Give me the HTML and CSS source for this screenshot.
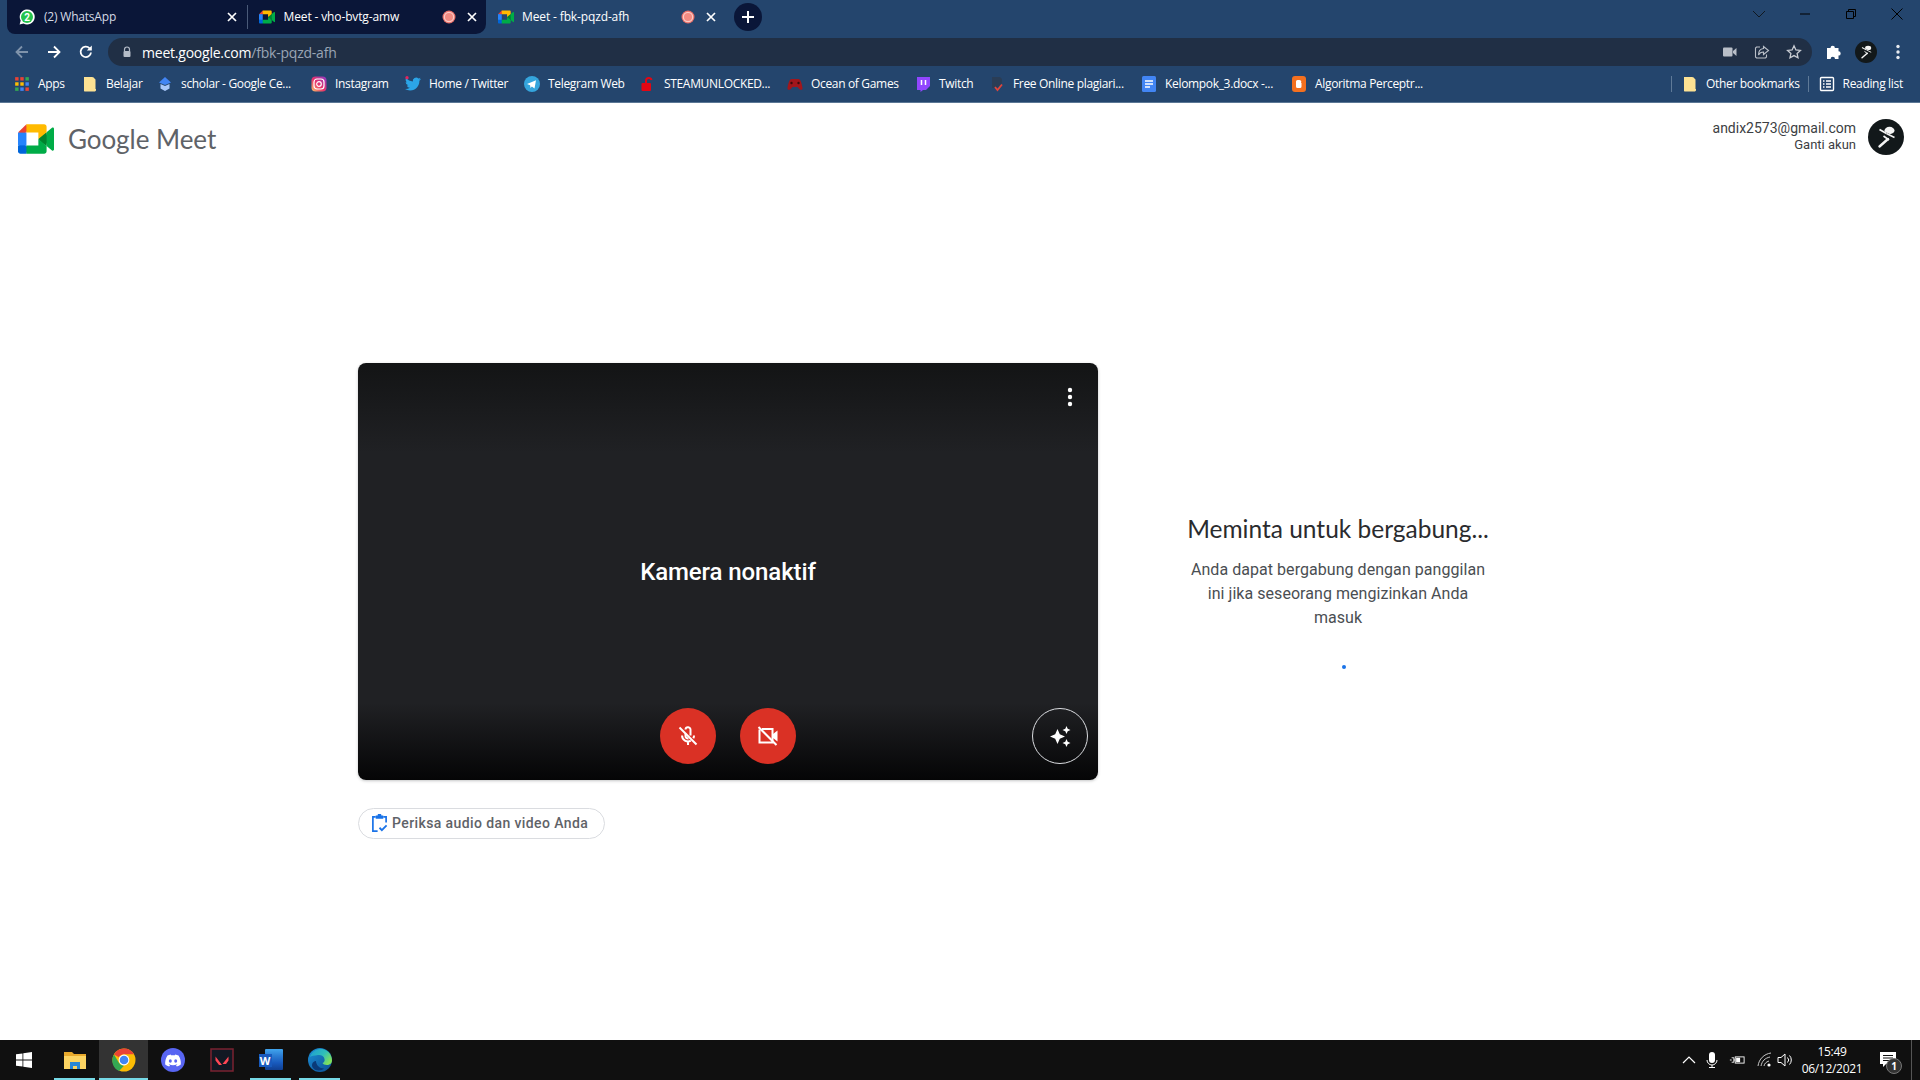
FILE: index.html
```html
<!DOCTYPE html>
<html lang="id">
<head>
<meta charset="utf-8">
<title>Meet - fbk-pqzd-afh</title>
<link rel="stylesheet" href="styles.css">
</head>
<body>
<svg class="defs" width="0" height="0" aria-hidden="true">
  <symbol id="meet" viewBox="0 0 87.5 72">
    <path fill="#00832d" d="M49.5 36l8.53 9.75 11.47 7.33 2-17.02-2-16.64-11.69 6.44z"/>
    <path fill="#0066da" d="M0 51.5V66c0 3.315 2.685 6 6 6h14.5l3-10.96-3-9.54-9.95-3z"/>
    <path fill="#e94235" d="M20.5 0L0 20.5l10.55 3 9.95-3 2.95-9.41z"/>
    <path fill="#2684fc" d="M20.5 20.5H0v31h20.5z"/>
    <path fill="#00ac47" d="M82.6 8.68L69.5 19.42v33.66l13.16 10.79c1.97 1.54 4.85.135 4.85-2.37V11c0-2.535-2.945-3.925-4.91-2.32zM49.5 36v15.5h-29V72h43c3.315 0 6-2.685 6-6V53.08z"/>
    <path fill="#ffba00" d="M63.5 0h-43v20.5h29V36l20-16.57V6c0-3.315-2.685-6-6-6z"/>
  </symbol>
  <symbol id="close" viewBox="0 0 16 16">
    <path d="M4 4l8 8M12 4l-8 8" stroke="#fff" stroke-width="1.700" fill="none"/>
  </symbol>
  <symbol id="rec" viewBox="0 0 16 16">
    <circle cx="8" cy="8" r="6.500" fill="#e8716a"/>
    <circle cx="8" cy="8" r="5.300" fill="#fbc9c4"/>
    <circle cx="8" cy="8" r="4" fill="#f28b82"/>
  </symbol>
  <symbol id="folder" viewBox="0 0 16 16">
    <path d="M2 1h8.500l.5 .5V13h3v1.500l-1 1H2.500L2 15z" fill="#fde293"/>
    <path d="M11 1.500h1v.5l1.500 1.500V13H11z" fill="#fde293"/>
  </symbol>
  <symbol id="avatar" viewBox="0 0 36 36">
    <circle cx="18" cy="18" r="18" fill="#12181a"/>
    <ellipse cx="21.500" cy="11.500" rx="5" ry="3.700" fill="#f4f4f4"/>
    <path d="M11.500 11l15.500 7.500" stroke="#12181a" stroke-width="1.500"/>
    <path d="M11.500 10.500l7 4" stroke="#f4f4f4" stroke-width="1.800"/>
    <path d="M18.500 14.500l8 4" stroke="#f4f4f4" stroke-width="1.400"/>
    <path d="M20 20l-8.500 7.500" stroke="#f4f4f4" stroke-width="2.400" stroke-linecap="round"/>
    <path d="M15.500 17l5.500 4" stroke="#f4f4f4" stroke-width="1.600"/>
  </symbol>
</svg>

<header class="browser">
  <div class="tabstrip">
    <div class="tabs">
      <div class="tab">
        <svg class="fav" viewBox="0 0 16 16"><path d="M.6 15.500l1.100-3.900A7.500 7.500 0 1 1 4.500 14.400z" fill="#fff"/><circle cx="8" cy="8" r="6" fill="#25c44d"/><text x="8" y="11.500" class="fav-num">2</text></svg>
        <span class="tab-title muted">(2) WhatsApp</span>
        <svg class="tab-close"><use href="#close"/></svg>
      </div>
      <div class="tab split">
        <svg class="fav"><use href="#meet"/></svg>
        <span class="tab-title">Meet - vho-bvtg-amw</span>
        <svg class="tab-rec"><use href="#rec"/></svg>
        <svg class="tab-close"><use href="#close"/></svg>
      </div>
    </div>
    <div class="tab active">
      <svg class="fav"><use href="#meet"/></svg>
      <span class="tab-title">Meet - fbk-pqzd-afh</span>
      <svg class="tab-rec"><use href="#rec"/></svg>
      <svg class="tab-close"><use href="#close"/></svg>
    </div>
    <div class="newtab"><svg viewBox="0 0 16 16" width="16" height="16"><path d="M8 2v12M2 8h12" stroke="#fff" stroke-width="2"/></svg></div>
    <div class="winctl">
      <svg viewBox="0 0 16 16" class="wc"><path d="M2 5l6 6 6-6" stroke="#101820" fill="none"/></svg>
      <svg viewBox="0 0 16 16" class="wc"><path d="M3 8h10" stroke="#000" stroke-width="1"/></svg>
      <svg viewBox="0 0 16 16" class="wc"><path d="M3.500 5.500h7v7h-7zM5.500 5.500v-2h7v7h-2" stroke="#000" fill="none"/></svg>
      <svg viewBox="0 0 16 16" class="wc"><path d="M2.500 2.500l11 11M13.500 2.500l-11 11" stroke="#000" fill="none"/></svg>
    </div>
  </div>

  <div class="toolbar">
    <div class="nav">
      <svg viewBox="0 0 16 16" class="navbtn"><path d="M14 8H3M8 2.500L2.500 8 8 13.500" stroke="#7f93ab" stroke-width="1.800" fill="none"/></svg>
      <svg viewBox="0 0 16 16" class="navbtn"><path d="M2 8h11M8 2.500L13.500 8 8 13.500" stroke="#fff" stroke-width="1.800" fill="none"/></svg>
      <svg viewBox="0 0 16 16" class="navbtn"><path d="M13 8.500A5.200 5.200 0 1 1 11.600 4.300" stroke="#fff" stroke-width="1.800" fill="none"/><path d="M13.800 1.500v5h-5z" fill="#fff"/></svg>
    </div>
    <div class="omnibox">
      <svg viewBox="0 0 12 12" class="lock"><path d="M3.500 5V3.500a2.500 2.500 0 0 1 5 0V5" stroke="#b4bcc8" stroke-width="1.200" fill="none"/><rect x="2.500" y="5" width="7" height="6" rx="1" fill="#b4bcc8"/></svg>
      <span class="url"><span class="host">meet.google.com</span><span class="path">/fbk-pqzd-afh</span></span>
      <div class="omni-actions">
        <svg viewBox="0 0 16 16" class="omni-ic"><rect x="1" y="3.500" width="9.500" height="9" rx="1" fill="#b9bfc8"/><path d="M11 7l3.500-3v8L11 9z" fill="#b9bfc8"/></svg>
        <svg viewBox="0 0 16 16" class="omni-ic"><path d="M6 3H2.500l-1 1v9l1 1h9l1-1v-2.500" stroke="#b9bfc8" stroke-width="1.100" fill="none"/><path d="M9.500 2.500l5 4-5 4V8C7 8 5.500 9 4.500 11c0-4 2-6.200 5-6.500z" stroke="#b9bfc8" stroke-width="1.100" fill="none"/></svg>
        <svg viewBox="0 0 16 16" class="omni-ic"><path d="M8 1.800l1.900 4.100 4.500.5-3.300 3 .9 4.400L8 11.600l-4 2.200.9-4.400-3.300-3 4.500-.5z" stroke="#c8ccd3" stroke-width="1.300" fill="none"/></svg>
      </div>
    </div>
    <div class="tb-right">
      <div class="tb-slot"><svg viewBox="0 0 18 18" class="puzzle"><path d="M2 5h3.500a2.200 2.200 0 1 1 4.400 0h3.600v3.200a2.200 2.200 0 1 1 0 4.400V16H10a2.200 2.200 0 0 0-4.400 0H2z" fill="#fff"/></svg></div>
      <div class="tb-slot"><svg class="tb-avatar"><use href="#avatar"/></svg></div>
      <div class="tb-slot"><svg viewBox="0 0 16 16" class="omni-ic"><circle cx="8" cy="2.500" r="1.700" fill="#e8ebf0"/><circle cx="8" cy="8" r="1.700" fill="#e8ebf0"/><circle cx="8" cy="13.500" r="1.700" fill="#e8ebf0"/></svg></div>
    </div>
  </div>

  <div class="bookmarks">
    <div class="bm-list">
      <div class="bm">
        <svg viewBox="0 0 14 14" class="bm-ic"><path fill="#ea4335" d="M1 1h3v3H1z"/><path fill="#ea4335" d="M5.500 1h3v3h-3z"/><path fill="#34a853" d="M10 1h3v3h-3z"/><path fill="#fbbc04" d="M1 5.500h3v3H1z"/><path fill="#fbbc04" d="M5.500 5.500h3v3h-3z"/><path fill="#4285f4" d="M10 5.500h3v3h-3z"/><path fill="#34a853" d="M1 10h3v3H1z"/><path fill="#4285f4" d="M5.500 10h3v3h-3z"/><path fill="#ea4335" d="M10 10h3v3h-3z"/></svg>
        <span>Apps</span>
      </div>
      <div class="bm"><svg class="bm-ic"><use href="#folder"/></svg><span>Belajar</span></div>
      <div class="bm">
        <svg viewBox="0 0 16 16" class="bm-ic"><path d="M8 1l6 5.500L8 9 2 6.500z" fill="#4285f4"/><path d="M3.500 8L8 10l4.500-2v4.500L8 15l-4.500-2.500z" fill="#a8c7fa"/></svg>
        <span>scholar - Google Ce...</span>
      </div>
      <div class="bm">
        <svg viewBox="0 0 16 16" class="bm-ic"><defs><linearGradient id="ig" x1="0" y1="1" x2="1" y2="0"><stop offset="0" stop-color="#fdc468"/><stop offset=".45" stop-color="#e8336a"/><stop offset="1" stop-color="#8a3ac8"/></linearGradient></defs><rect x=".5" y=".5" width="15" height="15" rx="4" fill="url(#ig)"/><rect x="3" y="3" width="10" height="10" rx="3" fill="none" stroke="#fff" stroke-width="1.200"/><circle cx="8" cy="8" r="2.300" fill="none" stroke="#fff" stroke-width="1.200"/></svg>
        <span>Instagram</span>
      </div>
      <div class="bm">
        <svg viewBox="0 0 24 24" class="bm-ic"><path fill="#2ba5e8" d="M23.953 4.570a10 10 0 01-2.825.775 4.958 4.958 0 002.163-2.723c-.951.555-2.005.959-3.127 1.184a4.920 4.920 0 00-8.384 4.482C7.690 8.095 4.067 6.130 1.640 3.162a4.822 4.822 0 00-.666 2.475c0 1.710.870 3.213 2.188 4.096a4.904 4.904 0 01-2.228-.616v.06a4.923 4.923 0 003.946 4.827 4.996 4.996 0 01-2.212.085 4.936 4.936 0 004.604 3.417 9.867 9.867 0 01-6.102 2.105c-.39 0-.779-.023-1.170-.067a13.995 13.995 0 007.557 2.209c9.053 0 13.998-7.496 13.998-13.985 0-.21 0-.42-.015-.63A9.935 9.935 0 0024 4.590z"/><circle cx="3" cy="2.500" r="2.500" fill="#e0245e"/></svg>
        <span>Home / Twitter</span>
      </div>
      <div class="bm">
        <svg viewBox="0 0 16 16" class="bm-ic"><circle cx="8" cy="8" r="8" fill="#35a5dd"/><path d="M3 8l9-3.800-1.500 8.300-2.600-2-1.400 1.400-.4-2.600z" fill="#fff"/></svg>
        <span>Telegram Web</span>
      </div>
      <div class="bm">
        <svg viewBox="0 0 16 16" class="bm-ic"><path d="M6 7V4.500a2.800 2.800 0 0 1 5.500-.5" stroke="#e30613" stroke-width="2" fill="none"/><rect x="1.500" y="7" width="9.500" height="8" rx="1" fill="#e30613"/></svg>
        <span>STEAMUNLOCKED...</span>
      </div>
      <div class="bm">
        <svg viewBox="0 0 16 16" class="bm-ic"><path d="M4.500 3h7c2 0 3.500 5 4 9 .2 2-2 2.500-3.200 1L10.500 11h-5L3.700 13c-1.200 1.500-3.400 1-3.200-1 .5-4 2-9 4-9z" fill="#a2161c"/><circle cx="4.500" cy="7" r="1.200" fill="#3c0a0d"/><circle cx="11.500" cy="7" r="1.200" fill="#3c0a0d"/></svg>
        <span>Ocean of Games</span>
      </div>
      <div class="bm">
        <svg viewBox="0 0 16 16" class="bm-ic"><path d="M2 1h13v9l-4 4H8l-2.500 2v-2H2z" fill="#9146ff"/><path d="M6.500 4v5M10.500 4v5" stroke="#fff" stroke-width="1.500"/></svg>
        <span>Twitch</span>
      </div>
      <div class="bm">
        <svg viewBox="0 0 16 16" class="bm-ic"><path d="M3 1h8l2 2v4l-5 5H3z" fill="#2a3d56"/><path d="M6 11l2.500 3L13 8.500" stroke="#e2453a" stroke-width="1.800" fill="none"/></svg>
        <span>Free Online plagiari...</span>
      </div>
      <div class="bm">
        <svg viewBox="0 0 16 16" class="bm-ic"><rect x="1" y="0" width="14" height="16" rx="1.500" fill="#4285f4"/><path d="M4 5h8M4 8h8M4 11h5" stroke="#fff" stroke-width="1.500"/></svg>
        <span>Kelompok_3.docx -...</span>
      </div>
      <div class="bm">
        <svg viewBox="0 0 16 16" class="bm-ic"><rect x="1" y="0" width="14" height="16" rx="3" fill="#f4701f"/><path d="M5 7V5.500A1.500 1.500 0 0 1 6.500 4H8a2 2 0 0 1 2 3h.5v3.500A1.500 1.500 0 0 1 9 12H6.500A1.500 1.500 0 0 1 5 10.500z" fill="#fff"/></svg>
        <span>Algoritma Perceptr...</span>
      </div>
    </div>
    <div class="bm-right">
      <span class="bm-sep"></span>
      <div class="bm"><svg class="bm-ic"><use href="#folder"/></svg><span>Other bookmarks</span></div>
      <span class="bm-sep"></span>
      <div class="bm">
        <svg viewBox="0 0 16 16" class="bm-ic"><rect x="1.500" y="1.500" width="13" height="13" rx="1" stroke="#fff" stroke-width="1.400" fill="none"/><path d="M4 5h1.500M4 8h1.500M4 11h1.500M7 5h5M7 8h5M7 11h5" stroke="#fff" stroke-width="1.300"/></svg>
        <span>Reading list</span>
      </div>
    </div>
  </div>
</header>

<main class="page">
  <div class="topbar">
    <div class="brand">
      <svg class="brand-logo"><use href="#meet"/></svg>
      <span class="brand-name">Google Meet</span>
    </div>
    <div class="account">
      <div class="account-text">
        <div class="account-mail">andix2573@gmail.com</div>
        <div class="account-switch">Ganti akun</div>
      </div>
      <svg class="account-avatar"><use href="#avatar"/></svg>
    </div>
  </div>

  <div class="stage">
    <div class="preview-col">
      <div class="preview">
        <span class="cam-off">Kamera nonaktif</span>
        <svg viewBox="0 0 24 24" class="more"><circle cx="12" cy="5" r="2.200" fill="#fff"/><circle cx="12" cy="12" r="2.200" fill="#fff"/><circle cx="12" cy="19" r="2.200" fill="#fff"/></svg>
        <div class="controls">
          <div class="ctl">
            <svg viewBox="0 0 24 24" class="ctl-ic"><path d="M14.500 11.500V6a2.500 2.500 0 0 0-5-.5" stroke="#fff" stroke-width="2" fill="none"/><path d="M9.500 9.500V12a2.500 2.500 0 0 0 3 2.400" stroke="#fff" stroke-width="2" fill="none"/><path d="M6 11.500a6 6 0 0 0 8.800 5.200M18 11.500a6 6 0 0 1-.7 2.800M12 18v3" stroke="#fff" stroke-width="2" fill="none"/><path d="M3.500 3.500l17 17" stroke="#fff" stroke-width="2"/></svg>
          </div>
          <div class="ctl">
            <svg viewBox="0 0 24 24" class="ctl-ic"><path d="M6 5h10.500v13.500H3.500V5.500" stroke="#fff" stroke-width="2" fill="none"/><path d="M17 10l4.500-3.500v11L17 14z" fill="#fff"/><path d="M2.500 3l18 18" stroke="#fff" stroke-width="2"/></svg>
          </div>
        </div>
        <div class="effects">
          <svg viewBox="0 0 24 24" class="ctl-ic"><path d="M9.500 5l2.300 5.200L17 12.500l-5.200 2.300L9.500 20l-2.300-5.200L2 12.500l5.200-2.300z" fill="#fff"/><path d="M18.500 2l1.200 2.800L22.500 6l-2.800 1.200L18.500 10l-1.200-2.800L14.500 6l2.800-1.200zM18.500 15l1.200 2.800 2.800 1.200-2.800 1.200-1.200 2.800-1.200-2.800-2.800-1.200 2.800-1.200z" fill="#fff"/></svg>
        </div>
      </div>
      <div class="check-pill">
        <svg viewBox="0 0 18 20" class="check-ic"><path d="M5 3H2v15h5M13 3h3v6" stroke="#1a73e8" stroke-width="1.800" fill="none"/><path d="M5 1.500h2a2 2 0 0 1 4 0h2V5H5z" fill="#1a73e8"/><path d="M9 14.500l2.500 2.500 5-5" stroke="#1a73e8" stroke-width="1.900" fill="none"/></svg>
        <span>Periksa audio dan video Anda</span>
      </div>
    </div>
    <div class="status">
      <h1 class="status-title">Meminta untuk bergabung...</h1>
      <p class="status-text">Anda dapat bergabung dengan panggilan ini jika seseorang mengizinkan Anda masuk</p>
      <div class="spinner"></div>
    </div>
  </div>
</main>

<footer class="taskbar">
  <div class="start">
    <svg viewBox="0 0 16 16" width="16" height="16"><path d="M0 2.300l6.500-.9v6.200H0zM7.300 1.300L16 0v7.600H7.300zM0 8.400h6.500v6.200L0 13.700zM7.300 8.400H16V16l-8.700-1.300z" fill="#fff"/></svg>
  </div>
  <div class="task open">
    <svg viewBox="0 0 24 24" class="task-ic"><path d="M1 4h8l2 2h12v15H1z" fill="#e8a92c"/><path d="M1 8h22v13H1z" fill="#fcd462"/><path d="M7 14h10v7h-3v-3h-4v3H7z" fill="#2a87d6"/></svg>
  </div>
  <div class="task open current">
    <svg viewBox="0 0 24 24" class="task-ic"><circle cx="12" cy="12" r="11.500" fill="#fbbc04"/><path d="M12 .5a11.500 11.500 0 0 1 10 5.750H12a5.750 5.750 0 0 0-5 2.900L2 6.500A11.500 11.500 0 0 1 12 .5z" fill="#ea4335"/><path d="M2 6.500l5 8.500a5.750 5.750 0 0 0 5 2.750L7 23A11.500 11.500 0 0 1 2 6.500z" fill="#34a853"/><circle cx="12" cy="12" r="5.400" fill="#fff"/><circle cx="12" cy="12" r="4.300" fill="#4285f4"/></svg>
  </div>
  <div class="task">
    <svg viewBox="0 0 24 24" class="task-ic"><circle cx="12" cy="12" r="12" fill="#5865f2"/><path d="M17.500 7.500A13 13 0 0 0 14.300 6.500l-.4.8a12 12 0 0 0-3.800 0l-.4-.8a13 13 0 0 0-3.200 1C4.500 10.600 4 13.600 4.200 16.500a13 13 0 0 0 4 2l.8-1.300-1.300-.6.300-.3a9.500 9.500 0 0 0 8 0l.3.3-1.300.6.8 1.300a13 13 0 0 0 4-2c.3-3.400-.5-6.300-2.300-9z" fill="#fff"/><ellipse cx="9.300" cy="13" rx="1.500" ry="1.700" fill="#5865f2"/><ellipse cx="14.700" cy="13" rx="1.500" ry="1.700" fill="#5865f2"/></svg>
  </div>
  <div class="task">
    <svg viewBox="0 0 24 24" class="task-ic"><rect x="1" y="1" width="22" height="22" fill="#111823" stroke="#7a2230" stroke-width="1.500"/><path d="M5.500 8.500l6.500 8.500H9L5.500 12.500zM18.500 8.500v4L16 16h-3.500z" fill="#ff4655"/></svg>
  </div>
  <div class="task open">
    <div class="word">
      <span class="word-sheet"></span>
      <span class="word-w">W</span>
    </div>
  </div>
  <div class="task open">
    <svg viewBox="0 0 24 24" class="task-ic"><defs><linearGradient id="edgeA" x1="0" y1="0" x2="1" y2="1"><stop offset="0" stop-color="#1c8fd6"/><stop offset="1" stop-color="#0c4f94"/></linearGradient><linearGradient id="edgeB" x1="0" y1="0" x2="1" y2=".6"><stop offset="0" stop-color="#1c9bd6"/><stop offset=".6" stop-color="#30bfb8"/><stop offset="1" stop-color="#7fe05c"/></linearGradient></defs><circle cx="12" cy="12" r="12" fill="url(#edgeA)"/><path d="M2 9C4 2 11 0 16 1.500 21 3 24 7.500 24 12.500c0 3-2.500 4.500-5 4.500-2.500 0-4-.8-4.500-2 1.500-.5 2.500-2 2-4C16 8 13 6.500 10 7 6 7.500 3.500 8 2 9z" fill="url(#edgeB)"/><path d="M8 13c0 4 3.500 7.500 8 7.500-2 2.500-8 3-11-.5C3 17.500 4 13.500 8 13z" fill="#0a3a78"/></svg>
  </div>
  <div class="tray">
    <svg viewBox="0 0 16 16" class="tray-ic"><path d="M2 11l6-6 6 6" stroke="#fff" stroke-width="1.200" fill="none"/></svg>
    <svg viewBox="0 0 16 16" class="tray-ic"><rect x="5" y="0" width="6" height="11" rx="3" fill="#fff"/><path d="M3 8a5 5 0 0 0 10 0M8 13v3M5 15.500h6" stroke="#fff" fill="none"/></svg>
    <svg viewBox="0 0 18 16" class="tray-ic"><path d="M1 8h2M3 5.500h2.500v5H3M5.500 8H7" stroke="#fff" fill="none"/><rect x="7" y="4.500" width="10" height="7" stroke="#fff" fill="none"/><rect x="8" y="5.500" width="4.500" height="5" fill="#fff"/></svg>
    <svg viewBox="0 0 16 16" class="tray-ic"><path d="M1 14C2 7 7 2 14 1M4 14C5 9 8 6 13 5M7 14c.5-2.500 2-4 5-5" stroke="#c8c8c8" fill="none"/><circle cx="12" cy="13" r="1.600" fill="#fff"/></svg>
    <svg viewBox="0 0 16 16" class="tray-ic"><path d="M1 5.500h3L8 2v12L4 10.500H1z" stroke="#fff" fill="none"/><path d="M10.500 5.500a3.500 3.500 0 0 1 0 5M12.500 3.500a6.500 6.500 0 0 1 0 9" stroke="#fff" fill="none"/></svg>
    <div class="clock"><div>15:49</div><div>06/12/2021</div></div>
    <div class="notif">
      <svg viewBox="0 0 16 16" width="16" height="16"><path d="M0 0h16v12H6l-3 3v-3H0z" fill="#fff"/><path d="M3 3.500h10M3 6h10M3 8.500h7" stroke="#111"/></svg>
      <span class="notif-badge">1</span>
    </div>
    <span class="desk"></span>
  </div>
</footer>
</body>
</html>
```

FILE: styles.css
```css
* { box-sizing: border-box; }

html, body { margin: 0; height: 100%; }

body {
  width: 1920px;
  height: 1080px;
  display: flex;
  flex-direction: column;
  overflow: hidden;
  background: #fff;
  font-family: Roboto, "Liberation Sans", sans-serif;
}

.defs { position: absolute; }

/* browser chrome */
.browser {
  flex: none;
  height: 103px;
  background: #24456d;
  border-bottom: 1px solid #5b7795;
  color: #fff;
  font-family: "Open Sans", "Liberation Sans", sans-serif;
  font-size: 12px;
}

.tabstrip { height: 34px; display: flex; padding-left: 7px; }

.tabs {
  display: flex;
  background: #0a1638;
  border-radius: 0 0 10px 8px;
}

.tab {
  position: relative;
  width: 239.5px;
  height: 34px;
  display: flex;
  align-items: center;
  padding-left: 12px;
}

.tab.split::before {
  content: "";
  position: absolute;
  left: 0;
  top: 5px;
  bottom: 5px;
  width: 1px;
  background: #4a5a78;
}

.fav { width: 16px; height: 16px; flex: none; }
.fav-num { font: 700 10px Roboto, sans-serif; fill: #fff; text-anchor: middle; }

.tab-title {
  margin: 0 0 1px 9px;
  white-space: nowrap;
  letter-spacing: -.13px;
}
.tab-title.muted { color: #d5dbe6; letter-spacing: -.2px; }
.tab.active .tab-title { margin-left: 8px; }

.tab-close { position: absolute; left: 217px; top: 9px; width: 16px; height: 16px; }
.tab-rec { position: absolute; left: 194px; top: 9px; width: 16px; height: 16px; }

.newtab {
  width: 28px;
  height: 28px;
  margin: 3px 0 0 8px;
  border-radius: 50%;
  background: #0a1638;
  display: flex;
  align-items: center;
  justify-content: center;
}

.winctl {
  margin-left: auto;
  display: flex;
  gap: 30px;
  padding: 6px 15px 0 0;
}
.wc { width: 16px; height: 16px; }

.toolbar { height: 34px; display: flex; padding-top: 4px; }

.nav {
  width: 108px;
  height: 28px;
  flex: none;
  display: flex;
  align-items: center;
  padding-left: 14px;
  gap: 16px;
}
.navbtn { width: 16px; height: 16px; flex: none; }

.omnibox {
  flex: 1;
  height: 28px;
  background: #202f45;
  border-radius: 14px;
  display: flex;
  align-items: center;
  padding: 0 2px 0 13px;
}

.lock { width: 12px; height: 12px; flex: none; }

.url { margin-left: 9px; font-size: 14px; letter-spacing: -.22px; }
.host { color: #fff; }
.path { color: #9aa5b5; }

.omni-actions { margin-left: auto; display: flex; }
.omni-actions .omni-ic { margin: 0 8px; }
.omni-ic { width: 16px; height: 16px; flex: none; display: block; }

.tb-right { width: 108px; flex: none; height: 28px; display: flex; padding-left: 6px; }
.tb-slot { width: 32px; display: flex; align-items: center; justify-content: center; }
.tb-avatar { width: 22px; height: 22px; }
.puzzle { width: 18px; height: 18px; }

.bookmarks {
  height: 34px;
  display: flex;
  align-items: center;
  padding: 0 0 3px 14px;
  letter-spacing: -.33px;
}

.bm-list {
  display: grid;
  grid-template-columns: 68px 75px 154px 94px 119px 116px 147px 128px 74px 152px 150px auto;
  align-items: center;
}

.bm { display: flex; align-items: center; gap: 8px; white-space: nowrap; }
.bm-ic { width: 16px; height: 16px; flex: none; }

.bm-right {
  margin-left: auto;
  width: 249px;
  flex: none;
  display: flex;
  align-items: center;
}
.bm-right .bm { margin-left: 10px; margin-right: 8px; }
.bm-sep { width: 1px; height: 16px; flex: none; background: #5f7a98; }

/* meet page */
.page { flex: 1; min-height: 0; display: flex; flex-direction: column; }

.topbar {
  flex: none;
  display: flex;
  justify-content: space-between;
  align-items: center;
  padding: 16px 16px 0 18px;
}

.brand { display: flex; align-items: center; gap: 14px; }
.brand-logo { width: 36px; height: 30px; margin-top: 3px; }
.brand-name {
  padding-top: 4px;
  font-family: Lato, "Open Sans", sans-serif;
  font-size: 26px;
  color: #5f6368;
  letter-spacing: -.05px;
}

.account { display: flex; align-items: center; gap: 12px; }
.account-text { text-align: right; color: #3c4043; padding-bottom: 1px; }
.account-mail { font-size: 14px; line-height: 16px; margin-bottom: 1px; }
.account-switch { font-size: 13px; line-height: 16px; }
.account-avatar { width: 36px; height: 36px; }

.stage { display: flex; padding: 208px 0 0 358px; }

.preview-col { width: 740px; flex: none; }

.preview {
  position: relative;
  height: 417px;
  border-radius: 8px;
  background: linear-gradient(#131415 0, #202124 90px, #202124 340px, #050506 100%);
  box-shadow: 0 1px 3px rgba(60, 64, 67, .3);
  display: flex;
  align-items: center;
  justify-content: center;
}

.cam-off { color: #fff; font-size: 24px; font-weight: 500; letter-spacing: -.1px; }

.more { position: absolute; top: 22px; right: 16px; width: 24px; height: 24px; }

.controls {
  position: absolute;
  left: 0;
  right: 0;
  bottom: 16px;
  display: flex;
  justify-content: center;
  gap: 24px;
}

.ctl {
  width: 56px;
  height: 56px;
  border-radius: 50%;
  background: #da3125;
  display: flex;
  align-items: center;
  justify-content: center;
}
.ctl-ic { width: 24px; height: 24px; }

.effects {
  position: absolute;
  right: 10px;
  bottom: 16px;
  width: 56px;
  height: 56px;
  border-radius: 50%;
  border: 1px solid #dadce0;
  display: flex;
  align-items: center;
  justify-content: center;
}

.check-pill {
  width: 247px;
  height: 31px;
  margin-top: 28px;
  border: 1px solid #dadce0;
  border-radius: 16px;
  display: flex;
  align-items: center;
  gap: 4px;
  padding: 0 0 1px 12px;
  color: #5f6368;
  font-size: 14px;
  font-weight: 500;
  letter-spacing: .4px;
  white-space: nowrap;
}
.check-ic { width: 17px; height: 19px; flex: none; }

.status { width: 320px; margin-left: 80px; padding-top: 150px; text-align: center; }

.status-title {
  margin: 0;
  font-family: Lato, "Open Sans", sans-serif;
  font-size: 24.5px;
  line-height: 32px;
  font-weight: 400;
  color: #2a2b2e;
}

.status-text {
  margin: 13px 10px 0;
  font-size: 16px;
  line-height: 24px;
  letter-spacing: .05px;
  color: #4a4e52;
}

.spinner {
  width: 4px;
  height: 4px;
  margin: 35px 0 0 164px;
  border-radius: 50%;
  background: #1a73e8;
}

/* taskbar */
.taskbar {
  flex: none;
  height: 40px;
  background: #101010;
  display: flex;
  color: #fff;
  font-family: "Open Sans", "Liberation Sans", sans-serif;
  font-size: 12px;
}

.start { width: 50px; display: flex; align-items: center; justify-content: center; padding-right: 2px; }

.task {
  position: relative;
  width: 49px;
  display: flex;
  align-items: center;
  justify-content: center;
}
.task.current { background: #333; }
.task.open::after {
  content: "";
  position: absolute;
  left: 4px;
  right: 4px;
  bottom: 0;
  height: 2px;
  background: #76d9e6;
}
.task.current::after { left: 0; right: 0; }

.task-ic { width: 24px; height: 24px; }

.word { position: relative; width: 24px; height: 22px; }
.word-sheet {
  position: absolute;
  left: 6px;
  top: 0;
  width: 18px;
  height: 21px;
  border-radius: 1px;
  background: linear-gradient(#41a5ee 0, #2b7cd3 33%, #185abd 66%, #103f91 100%);
}
.word-w {
  position: absolute;
  left: 0;
  top: 5px;
  width: 13px;
  height: 13px;
  background: #185abd;
  color: #fff;
  font: 700 11px/13px "Open Sans", sans-serif;
  text-align: center;
}

.tray {
  margin-left: auto;
  width: 239px;
  display: grid;
  grid-template-columns: 23px 25px 28px 20px 23px 80px 31px 9px;
  align-items: center;
}
.tray-ic { width: 16px; height: 16px; display: block; }

.clock {
  width: 64px;
  text-align: center;
  font-size: 12px;
  line-height: 17px;
  letter-spacing: -.3px;
}

.notif { position: relative; width: 16px; height: 16px; }
.notif svg { display: block; }
.notif-badge {
  position: absolute;
  left: 6px;
  top: 6px;
  width: 16px;
  height: 16px;
  border-radius: 50%;
  background: #333;
  border: 1px solid #777;
  font-size: 10px;
  font-weight: 700;
  line-height: 14px;
  text-align: center;
}

.desk { width: 9px; height: 40px; border-left: 1px solid #555; }
```
